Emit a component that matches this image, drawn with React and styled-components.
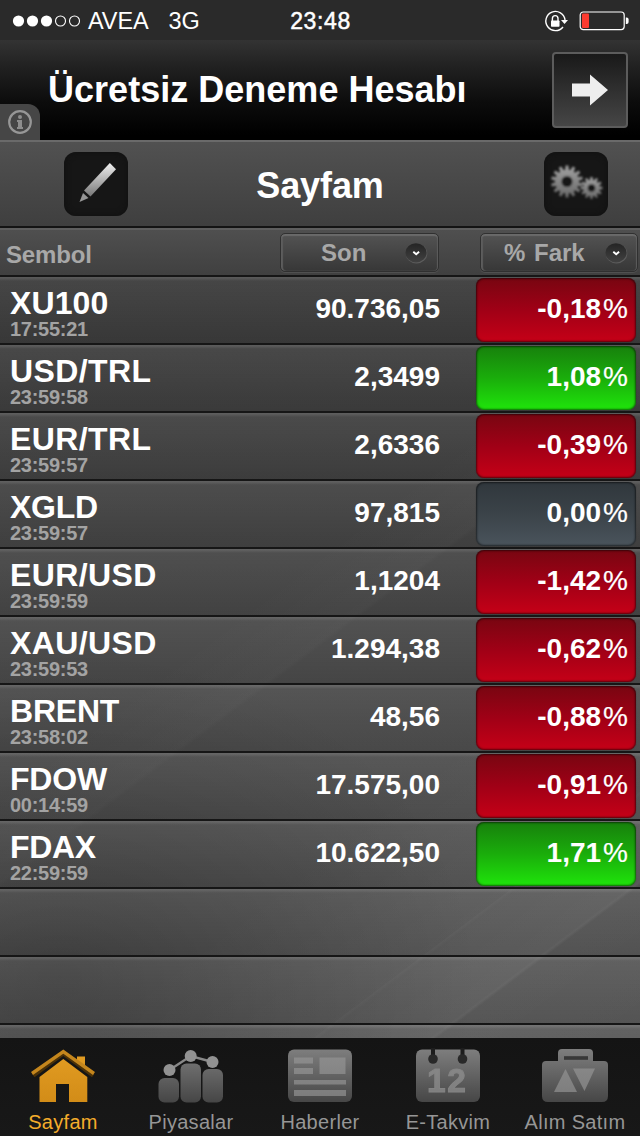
import React from "react";
import styled, { createGlobalStyle } from "styled-components";

const GlobalStyle = createGlobalStyle`
  * { box-sizing: border-box; }
  body { margin: 0; background: #151515; }
`;

const Screen = styled.div`
  width: 640px;
  height: 1136px;
  display: flex;
  flex-direction: column;
  overflow: hidden;
  color: #fff;
  font-family: "Liberation Sans", Arial, sans-serif;
  white-space: nowrap;
`;

const StatusBar = styled.header`
  height: 40px;
  flex: none;
  display: grid;
  grid-template-columns: 1fr auto 1fr;
  align-items: center;
  padding: 1px 11px 0 12px;
  background: #2a2a2a;
  font-size: 23.5px;
  line-height: 40px;
`;

const Carrier = styled.div`
  display: flex;
  align-items: center;
  letter-spacing: -0.1px;
  svg { margin-right: 7px; }
`;

const Network = styled.span`
  margin-left: 20px;
`;

const Clock = styled.time`
  font-size: 23px;
  letter-spacing: 0.6px;
  -webkit-text-stroke: 0.5px #fff;
`;

const StatusIcons = styled.div`
  display: flex;
  align-items: center;
  justify-content: flex-end;
  gap: 11px;
`;

const Banner = styled.section`
  height: 100px;
  flex: none;
  display: flex;
  align-items: flex-start;
  background: linear-gradient(#333 0%, #222 25%, #0c0c0c 62%, #000 95%);
`;

const InfoTab = styled.div`
  width: 40px;
  height: 36px;
  margin-top: 64px;
  display: flex;
  align-items: center;
  justify-content: center;
  background: #464646;
  border-top-right-radius: 12px;
`;

const BannerTitle = styled.h1`
  flex: 1;
  margin: 30px 0 0 8px;
  font-size: 36px;
  line-height: 40px;
  letter-spacing: 0.02px;
`;

const ArrowButton = styled.button`
  width: 76px;
  height: 76px;
  margin: 12px 12px 0 0;
  padding: 0;
  display: flex;
  align-items: center;
  justify-content: center;
  border: 2px solid #5c5c5c;
  border-radius: 4px;
  background: linear-gradient(#191919, #464646);
`;

const NavBar = styled.nav`
  height: 88px;
  flex: none;
  display: flex;
  align-items: center;
  justify-content: space-between;
  padding: 0 32px 0 64px;
  background: linear-gradient(#515151, #3f3f3f);
  border-top: 2px solid #6a6a6a;
  border-bottom: 2px solid #141414;
`;

const NavTitle = styled.h2`
  margin: 4px 0 0;
  font-size: 36px;
  line-height: 40px;
  letter-spacing: -0.1px;
  transform: translateX(-16px);
`;

const IconButton = styled.button`
  width: 64px;
  height: 64px;
  padding: 0;
  border: 0;
  border-radius: 12px;
  background: #161616;
  box-shadow: inset 0 0 6px #101010;
  svg { display: block; }
`;

const ColumnBar = styled.div`
  height: 49px;
  flex: none;
  display: flex;
  align-items: flex-start;
  padding: 2px 2px 0 6px;
  border-top: 2px solid #5e5e5e;
  border-bottom: 2px solid #161616;
  background: linear-gradient(#4f4f4f, #404040);
`;

const ColumnLabel = styled.span`
  flex: 1;
  padding-top: 10px;
  color: #a8a8a8;
  font-size: 24px;
  font-weight: bold;
  line-height: 26px;
  letter-spacing: -0.15px;
`;

const SortButton = styled.button`
  width: ${(p) => p.$width}px;
  height: 39px;
  margin: 1px 0 0 ${(p) => p.$gap || 0}px;
  padding: 0 ${(p) => p.$end}px 0 ${(p) => p.$inset}px;
  display: flex;
  align-items: center;
  justify-content: space-between;
  border: 1px solid #303030;
  border-radius: 5px;
  background: linear-gradient(#535353, #373737);
  box-shadow: inset 0 2px 1px #6a6a6a, inset 2px 0 1px #5c5c5c, inset -1px 0 1px #5c5c5c, 0 1px 0 #505050;
  color: #a8a8a8;
  font: bold 24px/38px "Liberation Sans", Arial, sans-serif;
  word-spacing: 2px;
`;

const QuoteList = styled.main`
  flex: 1;
  overflow: hidden;
  background:
    radial-gradient(ellipse 420px 330px at 60px 700px, rgba(0,0,0,.28), transparent),
    linear-gradient(143deg, transparent 410px, rgba(255,255,255,.02) 484px, rgba(255,255,255,0) 488px, transparent 650px, rgba(255,255,255,.03) 796px, rgba(255,255,255,.055) 797px, rgba(255,255,255,.035) 800px, rgba(255,255,255,.05) 866px, rgba(255,255,255,.07) 868px, rgba(255,255,255,.01) 871px, transparent),
    linear-gradient(#2c2c2c 0%, #363636 35%, #434343 70%, #4d4d4d 100%);
`;

const Row = styled.div`
  height: 68px;
  display: flex;
  align-items: flex-start;
  border-bottom: 2px solid #161616;
  background: linear-gradient(rgba(255,255,255,.21) 0 1px, rgba(255,255,255,.18) 2px, rgba(255,255,255,.12) 4px, rgba(255,255,255,.045) 66px);
`;

const Instrument = styled.div`
  width: 240px;
  padding: 10px 0 0 10px;
`;

const Symbol = styled.div`
  font-size: 32px;
  font-weight: bold;
  line-height: 32px;
  letter-spacing: ${(p) => p.$track}px;
`;

const Time = styled.div`
  color: #a3a3a3;
  font-size: 20px;
  font-weight: bold;
  line-height: 20px;
  letter-spacing: -0.28px;
`;

const Price = styled.div`
  width: 200px;
  padding-top: 17px;
  text-align: right;
  font-size: 28px;
  font-weight: bold;
  line-height: 30px;
`;

const tones = {
  down: "#780611, #a00016 50%, #c60017",
  up: "#17800c, #1aad0b 50%, #1fe50b",
  flat: "#30373c, #3b4349 50%, #4a545c",
};

const Change = styled.div`
  width: 160px;
  height: 64px;
  margin: 1px 0 0 36px;
  padding: 16px 8px 0 0;
  border-radius: 8px;
  background: linear-gradient(${(p) => tones[p.$tone]});
  box-shadow: inset 0 0 2px 1px rgba(0,0,0,.55), 0 0 1px rgba(0,0,0,.5);
  text-align: right;
  font-size: 28px;
  font-weight: bold;
  line-height: 30px;
`;

const Percent = styled.span`
  font-weight: normal;
  margin-left: 2px;
  -webkit-text-stroke: 0.2px #fff;
`;

const TabBar = styled.footer`
  height: 98px;
  flex: none;
  display: flex;
  background: linear-gradient(#141414, #181818);
`;

const Tab = styled.a`
  width: ${(p) => p.$width}px;
  padding-top: 8px;
  display: flex;
  flex-direction: column;
  align-items: center;
  color: ${(p) => (p.$active ? "#f5ad2b" : "#969696")};
  font-size: 20px;
  line-height: 24px;
  letter-spacing: ${(p) => p.$track || 0}px;
  svg { display: block; filter: blur(0.7px); }
`;

const TabLabel = styled.span`
  margin-top: 4px;
`;

const SignalDots = () => (
  <svg width="69" height="14" viewBox="0 0 69 14">
    {[0, 1, 2, 3, 4].map((n) => (
      <circle key={n} cx={6.5 + n * 14} cy="7" r={n < 3 ? 5.6 : 5} fill={n < 3 ? "#fff" : "none"} stroke={n < 3 ? "none" : "#fff"} strokeWidth="1.1" />
    ))}
  </svg>
);

const RotationLock = () => (
  <svg width="24" height="24" viewBox="0 0 24 24" fill="none" stroke="#fff" strokeWidth="1.4">
    <path d="M19 18A9.6 9.6 0 1 1 21 11" />
    <path d="M17 11h7l-3.5 4z" fill="#fff" stroke="none" />
    <path d="M8.4 12V9.4a2.8 2.8 0 0 1 5.6 0V12" />
    <rect x="7" y="11.5" width="8.5" height="6.2" rx=".7" fill="#fff" stroke="none" />
  </svg>
);

const Battery = () => (
  <svg width="50" height="20" viewBox="0 0 50 20">
    <rect x="1.2" y="1" width="44" height="17.6" rx="3" fill="none" stroke="#fff" strokeWidth="1.2" />
    <rect x="3" y="2.5" width="7" height="14.6" rx="1" fill="#fb3b30" />
    <path d="M46.8 6.5h.8a2 2 0 0 1 2 2v2.6a2 2 0 0 1-2 2h-.8z" fill="#fff" />
  </svg>
);

const InfoIcon = () => (
  <svg width="26" height="26" viewBox="0 0 26 26" fill="#8e8e8e">
    <circle cx="13" cy="13" r="10.8" fill="none" stroke="#979797" strokeWidth="2.2" />
    <circle cx="13" cy="8" r="2" />
    <path d="M10 11h5v7h1v2h-6v-2h1v-5h-1z" />
  </svg>
);

const PencilIcon = () => (
  <svg width="64" height="64" viewBox="0 0 64 64">
    <defs>
      <linearGradient id="pencil" x1="0" y1="0" x2="0" y2="1">
        <stop offset="0" stopColor="#f0f0f0" />
        <stop offset="1" stopColor="#777" />
      </linearGradient>
    </defs>
    <path d="M45.8 11L52 17.3L26.5 44.5L20 38.5Z" fill="url(#pencil)" />
    <path d="M19 41L24.5 46L15.5 50Z" fill="#959595" />
  </svg>
);

const gearPath = (cx, cy, teeth, outer, inner) => {
  const pts = [];
  for (let i = 0; i < teeth; i++) {
    [[-0.34, inner], [-0.2, outer], [0.2, outer], [0.34, inner]].forEach(([o, r]) => {
      const a = ((i + o) * 2 * Math.PI) / teeth;
      pts.push(`${(cx + r * Math.sin(a)).toFixed(2)} ${(cy - r * Math.cos(a)).toFixed(2)}`);
    });
  }
  return `M${pts.join("L")}Z`;
};

const GearsIcon = () => (
  <svg width="64" height="64" viewBox="0 0 64 64">
    <defs>
      <linearGradient id="gear" x1="0" y1="0" x2="0" y2="1">
        <stop offset="0" stopColor="#a2a2a2" />
        <stop offset="1" stopColor="#686868" />
      </linearGradient>
      <filter id="soft"><feGaussianBlur stdDeviation=".8" /></filter>
    </defs>
    <g filter="url(#soft)">
      <path d={gearPath(23, 29.5, 14, 16, 12)} fill="url(#gear)" />
      <circle cx="23" cy="29.5" r="5.5" fill="#161616" />
      <path d={gearPath(47.5, 36, 12, 11, 8.2)} fill="url(#gear)" />
      <circle cx="47.5" cy="36" r="3.8" fill="#161616" />
    </g>
  </svg>
);

const DropIcon = () => (
  <svg width="24" height="24" viewBox="0 0 24 24">
    <defs>
      <linearGradient id="drop" x1="0" y1="0" x2="0" y2="1">
        <stop offset="0" stopColor="#242424" />
        <stop offset="1" stopColor="#414141" />
      </linearGradient>
    </defs>
    <ellipse cx="12.5" cy="12.6" rx="10.8" ry="9.9" fill="#5d5d5d" />
    <ellipse cx="12" cy="11.8" rx="10.6" ry="9.6" fill="url(#drop)" />
    <path d="M9.3 10.7l2.9 2.5 2.9-2.5" fill="none" stroke="#fff" strokeWidth="1.9" />
  </svg>
);

const TabDefs = () => (
  <defs>
    <linearGradient id="grey" x1="0" y1="4" x2="0" y2="60" gradientUnits="userSpaceOnUse">
      <stop offset="0" stopColor="#7d7d7d" />
      <stop offset="1" stopColor="#424242" />
    </linearGradient>
    <linearGradient id="light" x1="0" y1="8" x2="0" y2="56" gradientUnits="userSpaceOnUse">
      <stop offset="0" stopColor="#8c8c8c" />
      <stop offset="1" stopColor="#7b7b7b" />
    </linearGradient>
    <linearGradient id="amber" x1="0" y1="8" x2="0" y2="60" gradientUnits="userSpaceOnUse">
      <stop offset="0" stopColor="#e29c22" />
      <stop offset="1" stopColor="#d18b17" />
    </linearGradient>
  </defs>
);

const TabIcon = ({ children }) => (
  <svg width="76" height="60" viewBox="0 0 76 60">
    <TabDefs />
    {children}
  </svg>
);

const HomeIcon = () => (
  <TabIcon>
    <path d="M52 10.5h8V24l-8-7zM14.5 31L38.3 13L62.3 31V56H44V38H31V56H14.5Z" fill="url(#amber)" />
    <path d="M8.5 29.8L38.3 8L68 29.8" fill="none" stroke="#4b3107" strokeWidth="3.4" />
    <path d="M7 27.5L38.3 5.5L69 27.5" fill="none" stroke="#c4861d" strokeWidth="3.4" />
  </TabIcon>
);

const MarketsIcon = () => (
  <TabIcon>
    <g fill="url(#grey)">
      <rect x="5.5" y="32" width="20.5" height="24.5" rx="6" />
      <rect x="27.5" y="17.5" width="20.5" height="39" rx="6" />
      <rect x="49.5" y="23" width="20.5" height="33.5" rx="6" />
    </g>
    <path d="M16.5 24L37.7 10L59.5 16" fill="none" stroke="#888" strokeWidth="2.4" />
    <g fill="#929292"><circle cx="16.5" cy="24" r="6" /><circle cx="37.7" cy="10" r="6" /><circle cx="59.5" cy="16" r="6" /></g>
  </TabIcon>
);

const NewsIcon = () => (
  <TabIcon>
    <rect x="6" y="3.5" width="64" height="52.5" rx="6" fill="url(#grey)" />
    <path d="M12 11.5h19v6H12zM12 22h19v6H12zM37.5 11.5h26v16.5h-26zM12 34h52v4.5H12zM12 44h52v6H12z" fill="url(#light)" />
  </TabIcon>
);

const CalendarText = styled.text`
  font: bold 33.5px "Liberation Sans", Arial, sans-serif;
  letter-spacing: 1.5px;
  stroke: #848484;
  stroke-width: 1px;
`;

const CalendarIcon = () => (
  <TabIcon>
    <rect x="6" y="3.5" width="64" height="52.5" rx="6" fill="url(#grey)" />
    <path d="M23 2v11M52.5 2v11" stroke="#1d1d1d" strokeWidth="4" />
    <circle cx="23" cy="13" r="4.8" fill="#292929" /><circle cx="52.5" cy="13" r="4.8" fill="#292929" />
    <CalendarText x="17" y="46" fill="url(#light)">12</CalendarText>
  </TabIcon>
);

const TradeIcon = () => (
  <TabIcon>
    <path d="M21 16V7q0-4 4-4h27q4 0 4 4v9z" fill="url(#grey)" />
    <path d="M9 15h58q4 0 4 4v31q0 6-6 6H11q-6 0-6-6V19q0-4 4-4z" fill="url(#grey)" />
    <path d="M27 12h24" stroke="#383838" strokeWidth="3.6" />
    <path d="M17 46L28.5 23L40 46ZM36 22.5H58L47.5 45Z" fill="url(#light)" />
  </TabIcon>
);

const quotes = [
  ["XU100", "17:55:21", "90.736,05", "-0,18", "down", 0.1],
  ["USD/TRL", "23:59:58", "2,3499", "1,08", "up", 0.4],
  ["EUR/TRL", "23:59:57", "2,6336", "-0,39", "down", 0.4],
  ["XGLD", "23:59:57", "97,815", "0,00", "flat", -0.3],
  ["EUR/USD", "23:59:59", "1,1204", "-1,42", "down", 0.4],
  ["XAU/USD", "23:59:53", "1.294,38", "-0,62", "down", 0.4],
  ["BRENT", "23:58:02", "48,56", "-0,88", "down", -0.2],
  ["FDOW", "00:14:59", "17.575,00", "-0,91", "down", -0.2],
  ["FDAX", "22:59:59", "10.622,50", "1,71", "up", -0.3],
];

const tabs = [
  ["Sayfam", HomeIcon, 126, 0.3],
  ["Piyasalar", MarketsIcon, 130, 0.3],
  ["Haberler", NewsIcon, 128, 0.3],
  ["E-Takvim", CalendarIcon, 128, 0.3],
  ["Alım Satım", TradeIcon, 126, 0.3],
];

export default function App() {
  return (
    <Screen>
      <GlobalStyle />
      <StatusBar>
        <Carrier><SignalDots />AVEA<Network>3G</Network></Carrier>
        <Clock>23:48</Clock>
        <StatusIcons><RotationLock /><Battery /></StatusIcons>
      </StatusBar>
      <Banner>
        <InfoTab><InfoIcon /></InfoTab>
        <BannerTitle>Ücretsiz Deneme Hesabı</BannerTitle>
        <ArrowButton aria-label="Aç">
          <svg width="36" height="32" viewBox="0 0 36 32"><path d="M0 9.5H18V.5L36 16L18 31.5V22.5H0Z" fill="#eee" /></svg>
        </ArrowButton>
      </Banner>
      <NavBar>
        <IconButton aria-label="Düzenle"><PencilIcon /></IconButton>
        <NavTitle>Sayfam</NavTitle>
        <IconButton aria-label="Ayarlar"><GearsIcon /></IconButton>
      </NavBar>
      <ColumnBar>
        <ColumnLabel>Sembol</ColumnLabel>
        <SortButton $width={159} $inset={40} $end={10}>Son<DropIcon /></SortButton>
        <SortButton $width={158} $inset={23} $end={9} $gap={41}>% Fark<DropIcon /></SortButton>
      </ColumnBar>
      <QuoteList>
        {quotes.map(([symbol, time, price, change, tone, track]) => (
          <Row key={symbol}>
            <Instrument><Symbol $track={track}>{symbol}</Symbol><Time>{time}</Time></Instrument>
            <Price>{price}</Price>
            <Change $tone={tone}>{change}<Percent>%</Percent></Change>
          </Row>
        ))}
        <Row /><Row /><Row />
      </QuoteList>
      <TabBar>
        {tabs.map(([label, Icon, width, track], i) => (
          <Tab key={label} $active={i === 0} $width={width} $track={track}>
            <Icon /><TabLabel>{label}</TabLabel>
          </Tab>
        ))}
      </TabBar>
    </Screen>
  );
}
